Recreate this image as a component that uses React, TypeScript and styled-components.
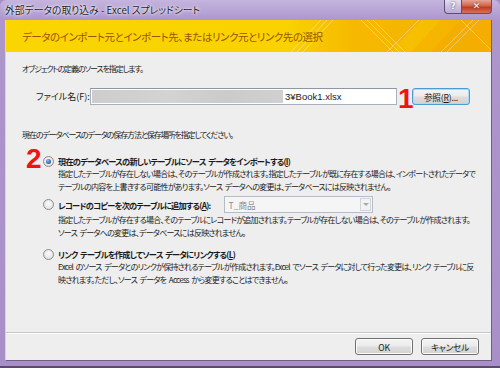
import React from "react";
import styled, { createGlobalStyle } from "styled-components";

const font = `"Noto Sans CJK JP", "Noto Sans", sans-serif`;

const Global = createGlobalStyle`
  html, body {
    margin: 0;
    padding: 0;
    background: #a58dc6;
  }
  * {
    box-sizing: border-box;
  }
`;

const Frame = styled.div`
  width: 500px;
  height: 368px;
  display: flex;
  flex-direction: column;
  background: linear-gradient(180deg, #c4b4de 0px, #ad96cc 20px, #a88fc8 100%);
  border-bottom: 2px solid #5a4d6a;
  border-radius: 6px 6px 0 0;
  font-family: ${font};
  font-feature-settings: "palt";
  overflow: hidden;
`;

const TitleBar = styled.div`
  height: 20px;
  flex: none;
  display: flex;
  align-items: flex-start;
  padding-left: 5px;
`;

const Title = styled.div`
  font-size: 9.8px;
  line-height: 20px;
  color: #1e1e1e;
  text-shadow: 0 0 4px #ffffff, 0 0 2px #ffffff;
`;

const Caption = styled.div`
  margin-left: auto;
  margin-right: 8px;
  display: flex;
`;

const CapButton = styled.div<{ $close?: boolean }>`
  width: ${(p) => (p.$close ? "30px" : "18px")};
  height: 14px;
  border: 1px solid #5e4f74;
  border-top: none;
  border-left: ${(p) => (p.$close ? "none" : "1px solid #5e4f74")};
  border-radius: ${(p) => (p.$close ? "0 0 4px 0" : "0 0 0 4px")};
  background: ${(p) =>
    p.$close
      ? "linear-gradient(180deg, #e6a493 0%, #d2644c 45%, #bf3a22 55%, #d8735a 100%)"
      : "linear-gradient(180deg, rgba(255,255,255,0.55) 0%, rgba(255,255,255,0.25) 50%, rgba(255,255,255,0.1) 100%)"};
  color: #ffffff;
  font-family: "DejaVu Sans", sans-serif;
  font-weight: bold;
  font-size: 9px;
  line-height: 13px;
  text-align: center;
  text-shadow: 0 0 2px #333;
`;

const Client = styled.div`
  flex: 1;
  margin: 0 8px 5px 5px;
  display: flex;
  flex-direction: column;
  background: #eeeeee;
  border-left: 1px solid #d9d0e8;
  border-right: 1px solid #6e5f86;
  border-bottom: 1px solid #6e5f86;
`;

const Banner = styled.div`
  position: relative;
  height: 32px;
  flex: none;
  display: flex;
  align-items: center;
  padding-left: 16px;
  background: linear-gradient(90deg, #fad500 0%, #f9d200 58%, #f6b900 72%, #f5b200 100%);
  overflow: hidden;
`;

const BannerText = styled.div`
  position: relative;
  z-index: 1;
  font-size: 10.5px;
  color: #9b5200;
  letter-spacing: -0.45px;
`;

const BannerArt = styled.svg`
  position: absolute;
  top: 0;
  right: 0;
`;

const Body = styled.div`
  flex: 1;
  padding: 11px 12px 0 16px;
  display: flex;
  flex-direction: column;
  font-size: 8px;
  letter-spacing: -0.75px;
  word-spacing: 1.5px;
  color: #1a1a1a;
`;

const Line = styled.div<{ $top?: number }>`
  line-height: 12px;
  height: 12px;
  white-space: nowrap;
  letter-spacing: -1.1px;
  margin-top: ${(p) => p.$top ?? 0}px;
`;

const FileRow = styled.div`
  display: flex;
  align-items: center;
  height: 17px;
  margin-top: 13px;
  padding-left: 14px;
  letter-spacing: 0;
  word-spacing: 0;
`;

const FieldLabel = styled.div`
  width: 54px;
  font-size: 9px;
  white-space: nowrap;
`;

const TextBox = styled.div`
  width: 307px;
  height: 17px;
  display: flex;
  align-items: stretch;
  border: 1px solid #a9b0bd;
  border-top-color: #8e96a4;
  background: #ffffff;
  padding: 1px;
`;

const Redacted = styled.div`
  width: 191px;
  background: linear-gradient(90deg, #cdcdcd, #d3d3d3 40%, #cbcbcb 70%, #d0d0d0);
`;

const BoxText = styled.div`
  padding-left: 2px;
  line-height: 13px;
  font-family: "Liberation Sans", sans-serif;
  font-size: 9.5px;
`;

const Marker = styled.div`
  font-family: "Liberation Sans", sans-serif;
  font-weight: bold;
  font-size: 28px;
  line-height: 24px;
  letter-spacing: 0;
  color: #f21212;
`;

const FileMarker = styled(Marker)`
  width: 15px;
  margin-top: 5px;
  padding-left: 1px;
`;

const PushButton = styled.div<{ $focus?: boolean; $w?: number }>`
  width: ${(p) => p.$w ?? 58}px;
  height: 17px;
  border: 1px solid ${(p) => (p.$focus ? "#4d9bd1" : "#707070")};
  border-radius: 3px;
  background: linear-gradient(180deg, #f4f4f4 0%, #ebebeb 48%, #dddddd 52%, #d2d2d2 100%);
  box-shadow: inset 0 0 0 1px ${(p) => (p.$focus ? "#a6dcf6" : "#fbfbfb")};
  display: flex;
  align-items: center;
  justify-content: center;
  font-size: 8.6px;
  letter-spacing: -0.2px;
  color: #1a1a1a;
`;

const Option = styled.div<{ $top: number }>`
  position: relative;
  display: grid;
  grid-template-columns: 15px 1fr;
  margin-top: ${(p) => p.$top}px;
  padding-left: 21px;
`;

const OptionMarker = styled(Marker)`
  position: absolute;
  left: 4px;
  top: -8px;
`;

const Radio = styled.span<{ $on?: boolean; $offset?: number }>`
  width: 11px;
  height: 11px;
  margin-top: ${(p) => p.$offset ?? 1}px;
  border-radius: 50%;
  border: 1px solid #8b8b8b;
  background: radial-gradient(circle at 50% 40%, #fbfbfb 0%, #e8e8e8 60%, #d4d4d4 100%);
  display: flex;
  align-items: center;
  justify-content: center;
  &::after {
    content: "";
    display: ${(p) => (p.$on ? "block" : "none")};
    width: 5px;
    height: 5px;
    border-radius: 50%;
    background: radial-gradient(circle at 40% 35%, #8fc3f0 0%, #2b6cb0 60%, #1b3f78 100%);
  }
`;

const OptionHead = styled.div<{ $h?: number }>`
  display: flex;
  align-items: center;
  height: ${(p) => p.$h ?? 12}px;
`;

const OptionLabel = styled.div`
  font-weight: bold;
  font-size: 8.2px;
  line-height: 12px;
  letter-spacing: -0.75px;
  white-space: nowrap;
`;

const Desc = styled.div`
  grid-column: 2;
  line-height: 13px;
  white-space: nowrap;
`;

const Combo = styled.div`
  margin-left: 14px;
  width: 149px;
  height: 17px;
  border: 1px solid #b5bcc8;
  background: #f5f5f5;
  display: flex;
  align-items: center;
  justify-content: space-between;
  padding-left: 3px;
  color: #8d8d8d;
  font-size: 8.6px;
  letter-spacing: 0;
`;

const ComboArrow = styled.div`
  width: 11px;
  height: 13px;
  margin-right: 1px;
  border: 1px solid #d2d6dc;
  background: #f2f2f2;
  display: flex;
  align-items: center;
  justify-content: center;
  &::after {
    content: "";
    border-left: 3px solid transparent;
    border-right: 3px solid transparent;
    border-top: 3px solid #a8a8a8;
  }
`;

const Footer = styled.div`
  height: 28px;
  flex: none;
  border-top: 1px solid #c6c6c6;
  box-shadow: inset 0 1px 0 #ffffff;
  display: flex;
  justify-content: flex-end;
  gap: 8px;
  padding: 5px 12px 0 0;
  font-family: ${font};
`;

export default function App() {
  return (
    <>
      <Global />
      <Frame>
        <TitleBar>
          <Title>外部データの取り込み - Excel スプレッドシート</Title>
          <Caption>
            <CapButton>?</CapButton>
            <CapButton $close>✕</CapButton>
          </Caption>
        </TitleBar>
        <Client>
          <Banner>
            <BannerText>データのインポート元とインポート先、またはリンク元とリンク先の選択</BannerText>
            <BannerArt width="200" height="32" viewBox="0 0 200 32">
              <polygon points="100,32 130,0 150,0 120,32" fill="#f7c400" opacity="0.6" />
              <polygon points="140,32 170,0 200,0 200,32" fill="#f3a800" opacity="0.5" />
              <g stroke="#ffffff" strokeWidth="0.8" opacity="0.45">
                <line x1="0" y1="32" x2="30" y2="0" />
                <line x1="6" y1="32" x2="36" y2="0" />
                <line x1="12" y1="32" x2="42" y2="0" />
                <line x1="70" y1="0" x2="102" y2="32" />
                <line x1="76" y1="0" x2="108" y2="32" />
                <line x1="82" y1="0" x2="114" y2="32" />
                <line x1="96" y1="32" x2="128" y2="0" />
                <line x1="150" y1="32" x2="182" y2="0" />
                <line x1="156" y1="32" x2="188" y2="0" />
                <line x1="170" y1="0" x2="200" y2="30" />
              </g>
            </BannerArt>
          </Banner>
          <Body>
            <Line>オブジェクトの定義のソースを指定します。</Line>
            <FileRow>
              <FieldLabel>ファイル名(F):</FieldLabel>
              <TextBox>
                <Redacted />
                <BoxText>3¥Book1.xlsx</BoxText>
              </TextBox>
              <FileMarker>1</FileMarker>
              <PushButton $focus>
                参照(<u>R</u>)...
              </PushButton>
            </FileRow>
            <Line $top={24}>現在のデータベースのデータの保存方法と保存場所を指定してください。</Line>

            <Option $top={14}>
              <OptionMarker>2</OptionMarker>
              <Radio $on />
              <OptionHead>
                <OptionLabel>
                  現在のデータベースの新しいテーブルにソース データをインポートする(<u>I</u>)
                </OptionLabel>
              </OptionHead>
              <Desc>
                指定したテーブルが存在しない場合は、そのテーブルが作成されます。指定したテーブルが既に存在する場合は、インポートされたデータで
              </Desc>
              <Desc>
                テーブルの内容を上書きする可能性があります。ソース データへの変更は、データベースには反映されません。
              </Desc>
            </Option>

            <Option $top={3}>
              <Radio $offset={3} />
              <OptionHead $h={17}>
                <OptionLabel>
                  レコードのコピーを次のテーブルに追加する(<u>A</u>):
                </OptionLabel>
                <Combo>
                  T_商品
                  <ComboArrow />
                </Combo>
              </OptionHead>
              <Desc>
                指定したテーブルが存在する場合、そのテーブルにレコードが追加されます。テーブルが存在しない場合は、そのテーブルが作成されます。
              </Desc>
              <Desc>ソース データへの変更は、データベースには反映されません。</Desc>
            </Option>

            <Option $top={9}>
              <Radio />
              <OptionHead>
                <OptionLabel>
                  リンク テーブルを作成してソース データにリンクする(<u>L</u>)
                </OptionLabel>
              </OptionHead>
              <Desc>
                Excel のソース データとのリンクが保持されるテーブルが作成されます。Excel でソース データに対して行った変更は、リンク テーブルに反
              </Desc>
              <Desc>映されます。ただし、ソース データを Access から変更することはできません。</Desc>
            </Option>
          </Body>
          <Footer>
            <PushButton>OK</PushButton>
            <PushButton>キャンセル</PushButton>
          </Footer>
        </Client>
      </Frame>
    </>
  );
}
